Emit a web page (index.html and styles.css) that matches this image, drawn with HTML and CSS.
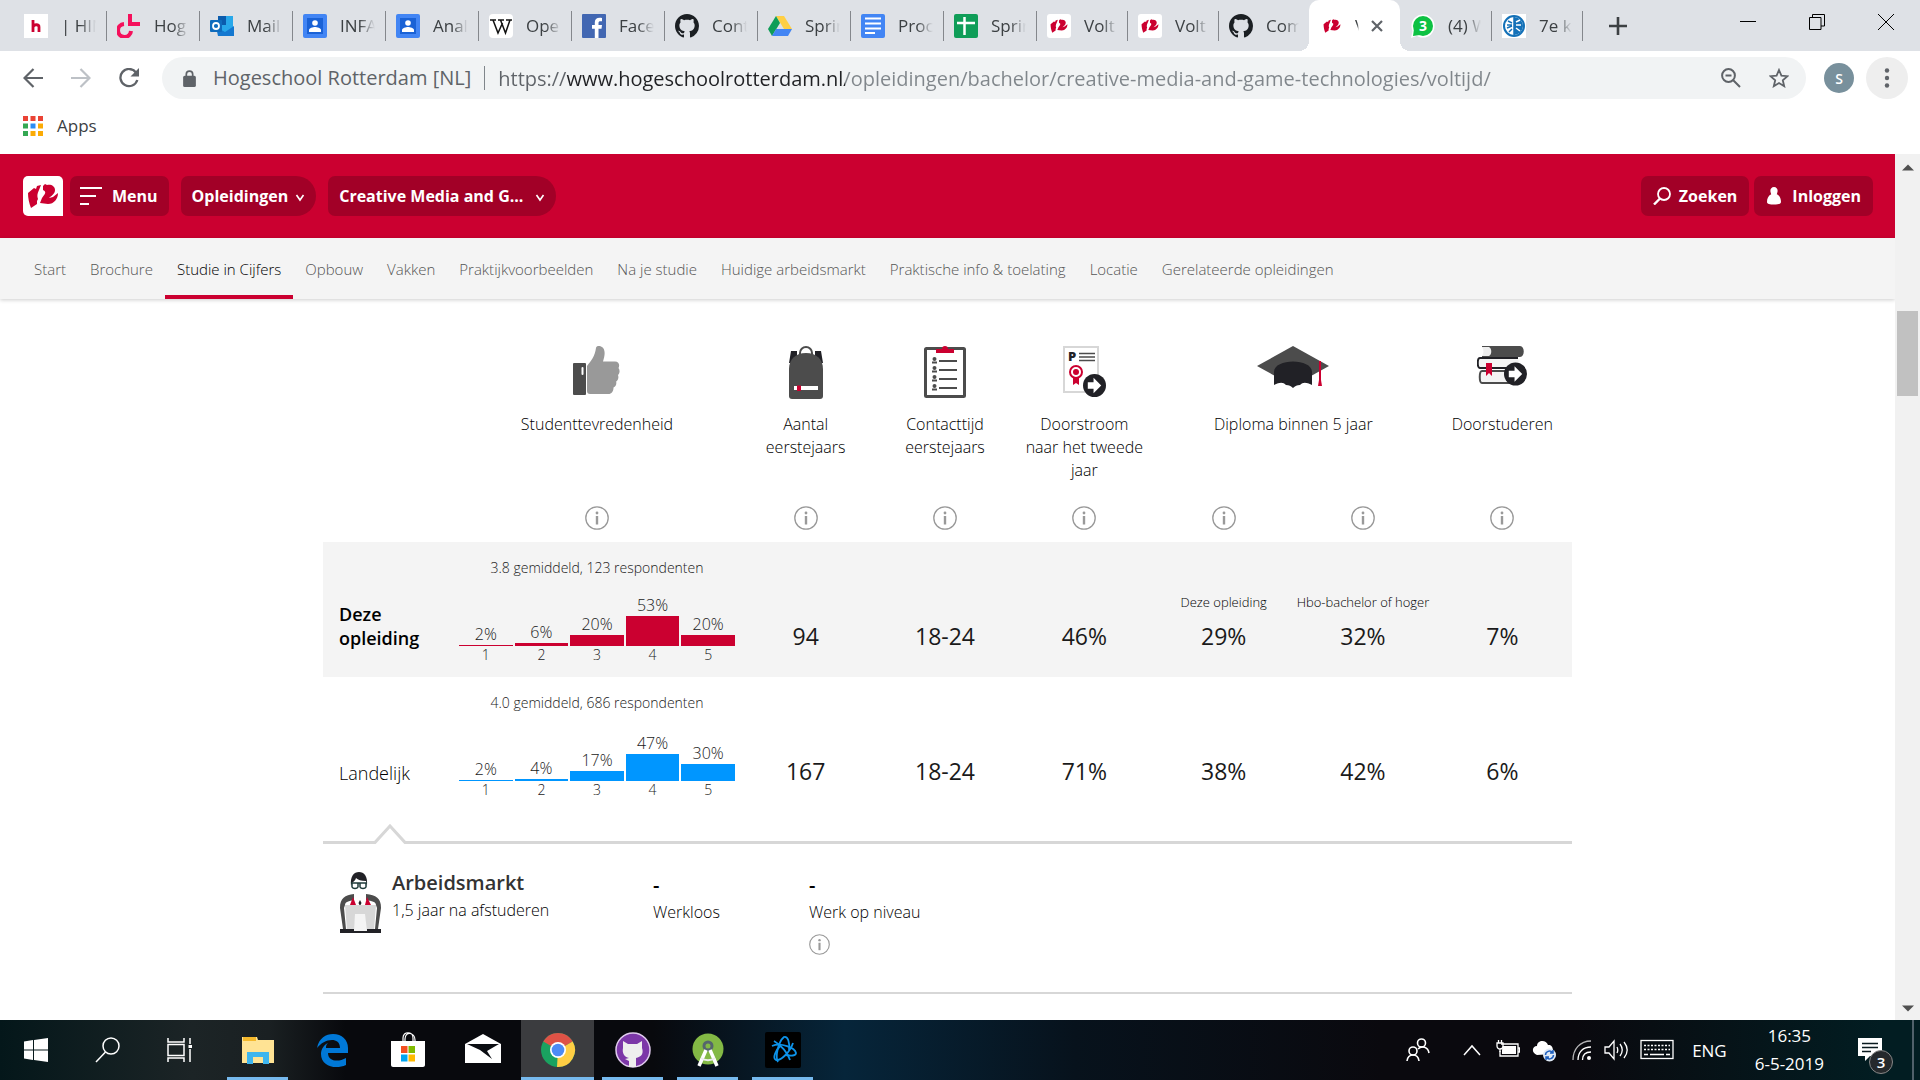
FILE: index.html
```html
<!DOCTYPE html>
<html lang="nl">
<head>
<meta charset="utf-8">
<meta name="viewport" content="width=device-width, initial-scale=1">
<title>Voltijd - Hogeschool Rotterdam</title>
<link rel="stylesheet" href="styles.css">
</head>
<body>
<svg class="defs" aria-hidden="true">
  <symbol id="hr-mark" viewBox="4 6 32 28">
    <path d="M5 17 11 12 13 13 14 10 18 9 16 14C14 18 14 20 15 23L14 25 14 28 8 32C6 27 5 22 5 17Z"/>
    <path d="M20 10 22 8 24 9C28 8 32 10 32 14 32 18 28 20 26 22L30 21 35 17C35 23 31 28 25 28L17 27 19 22C22 18 24 16 20 14Z"/>
  </symbol>
  <symbol id="github" viewBox="0 0 16 16">
    <path d="M8 0C3.58 0 0 3.58 0 8c0 3.54 2.29 6.53 5.47 7.59.4.07.55-.17.55-.38 0-.19-.01-.82-.01-1.49-2.01.37-2.53-.49-2.69-.94-.09-.23-.48-.94-.82-1.13-.28-.15-.68-.52-.01-.53.63-.01 1.08.58 1.23.82.72 1.21 1.87.87 2.33.66.07-.52.28-.87.51-1.07-1.78-.2-3.64-.89-3.64-3.95 0-.87.31-1.59.82-2.15-.08-.2-.36-1.02.08-2.12 0 0 .67-.21 2.2.82.64-.18 1.32-.27 2-.27s1.36.09 2 .27c1.53-1.04 2.2-.82 2.2-.82.44 1.1.16 1.92.08 2.12.51.56.82 1.27.82 2.15 0 3.07-1.87 3.75-3.65 3.95.29.25.54.73.54 1.48 0 1.07-.01 1.93-.01 2.2 0 .21.15.46.55.38A8.01 8.01 0 0 0 16 8c0-4.42-3.58-8-8-8z"/>
  </symbol>
  <symbol id="contact" viewBox="0 0 24 24">
    <rect width="24" height="24" rx="2" fill="#4285f4"/><rect x="4" y="4" width="16" height="16" fill="#1a62d6"/>
    <circle cx="12" cy="9" r="2.8" fill="#fff"/><path d="M6 18v-2c0-2 4-3 6-3s6 1 6 3v2z" fill="#fff"/>
  </symbol>
  <symbol id="info" viewBox="0 0 24 24">
    <circle cx="12" cy="12" r="11.2" fill="none" stroke="#999" stroke-width="1.3"/>
    <circle cx="12" cy="7" r="1.4" fill="#999"/><rect x="10.8" y="10" width="2.4" height="8.5" fill="#999"/>
  </symbol>
  <symbol id="go" viewBox="0 0 24 24">
    <circle cx="12" cy="12" r="12" fill="#212126"/><path d="M5 8.500h6V4l8 8-8 8v-4.500H5z" fill="#fff"/>
  </symbol>
  <symbol id="caret" viewBox="0 0 10 10"><path d="M1.500 3 5 8 8.500 3" fill="none" stroke="#fff" stroke-width="1.600"/></symbol>
</svg>

<header class="browser">
  <div class="tabstrip">
    <div class="tabs">
      <button class="tab"><svg class="favicon" viewBox="0 0 24 24"><rect width="24" height="24" fill="#fff"/><path d="M9 6v12M9 13c1-3 6-3 6 0v5" fill="none" stroke="#cb0030" stroke-width="2.800"/></svg><span>| HIN</span></button>
      <button class="tab"><svg class="favicon" viewBox="0 0 24 24"><path d="M13 0v10h10M7 10A6.500 6.500 0 1 0 14 17" fill="none" stroke="#f5105c" stroke-width="4"/></svg><span>Hog</span></button>
      <button class="tab"><svg class="favicon" viewBox="0 0 24 24"><path d="M8 2h15v20H8z" fill="#28a8ea"/><path d="M8 2h8v9H8z" fill="#0b5cad"/><path d="M6 13l9 5 9-6v10H8z" fill="#1478d0"/><rect y="6" width="12" height="12" rx="1" fill="#0f6cbd"/><circle cx="6" cy="12" r="3" fill="none" stroke="#fff" stroke-width="1.800"/></svg><span>Mail</span></button>
      <button class="tab"><svg class="favicon"><use href="#contact"/></svg><span>INFA</span></button>
      <button class="tab"><svg class="favicon"><use href="#contact"/></svg><span>Anal</span></button>
      <button class="tab"><svg class="favicon" viewBox="0 0 24 24"><rect width="24" height="24" rx="4" fill="#fff"/><path d="M1 6h6M9 6h6M17 6h6M4 6l5 13L13.500 9M11.500 6l5 13L21 6" fill="none" stroke="#111" stroke-width="1.500"/></svg><span>Ope</span></button>
      <button class="tab"><svg class="favicon" viewBox="0 0 24 24"><rect width="24" height="24" rx="1" fill="#4267b2"/><path d="M16.500 24v-9.300h3l.5-3.600h-3.500V9c0-1.200.5-1.800 2-1.800H20V4c-5-.7-7.200.8-7.200 4.500v2.600H10v3.600h2.800V24z" fill="#fff"/></svg><span>Face</span></button>
      <button class="tab"><svg class="favicon"><use href="#github" fill="#1b1f23"/></svg><span>Cont</span></button>
      <button class="tab"><svg class="favicon" viewBox="0 0 24 24"><path d="M8 2h8l8 13h-8z" fill="#ffcf44"/><path d="M8 2l4 7-8 13-4-7z" fill="#0f9d58"/><path d="M8 15h16l-4 7H4z" fill="#4285f4"/></svg><span>Sprin</span></button>
      <button class="tab"><svg class="favicon" viewBox="0 0 24 24"><rect width="24" height="24" rx="2" fill="#4285f4"/><path d="M4 4.500h16M4 9.500h16M4 14.500h16M4 19h10" stroke="#fff" stroke-width="2"/></svg><span>Proc</span></button>
      <button class="tab"><svg class="favicon" viewBox="0 0 24 24"><rect width="24" height="24" rx="2" fill="#0f9d58"/><path d="M3 9h18M10.500 3v18" stroke="#fff" stroke-width="2.500"/></svg><span>Sprin</span></button>
      <button class="tab"><svg class="favicon" viewBox="0 0 24 24"><rect width="24" height="24" rx="3" fill="#fff"/><use href="#hr-mark" x="3" y="3" width="18" height="18" fill="#cb0030"/></svg><span>Volt</span></button>
      <button class="tab"><svg class="favicon" viewBox="0 0 24 24"><rect width="24" height="24" rx="3" fill="#fff"/><use href="#hr-mark" x="3" y="3" width="18" height="18" fill="#cb0030"/></svg><span>Volt</span></button>
      <button class="tab before-active"><svg class="favicon"><use href="#github" fill="#1b1f23"/></svg><span>Com</span></button>
      <div class="tab active"><svg class="favicon" viewBox="0 0 24 24"><use href="#hr-mark" x="3" y="3" width="18" height="18" fill="#cb0030"/></svg><span>V</span><button class="close" aria-label="Tabblad sluiten"><svg viewBox="0 0 14 14"><path d="M2 2l10 10M12 2L2 12" stroke="#5f6368" stroke-width="2.200"/></svg></button></div>
      <button class="tab"><svg class="favicon" viewBox="0 0 24 24"><circle cx="12" cy="12" r="11.500" fill="#fff"/><path d="M0 24l2-9 6 6z" fill="#fff"/><circle cx="12" cy="12" r="10" fill="#0dc143"/><path d="M2 22l1-7 6 6z" fill="#0dc143"/><text x="12" y="17" text-anchor="middle" class="fav-text">3</text></svg><span>(4) W</span></button>
      <button class="tab"><svg class="favicon" viewBox="0 0 24 24"><rect width="24" height="24" fill="#fff"/><circle cx="12" cy="12" r="10" fill="#fff" stroke="#1471b8" stroke-width="2"/><path d="M12 3a9 9 0 0 1 0 18z" fill="#1471b8"/><path d="M12 2v20M6 7l4 2M5 11h5M5 14l5-2M7 18l3-3" stroke="#1471b8" stroke-width="1.500"/><path d="M14 8l4-2M14 11h5M14 14l4 3" stroke="#fff" stroke-width="1.500"/></svg><span>7e k</span></button>
    </div>
    <button class="newtab" aria-label="Nieuw tabblad"><svg viewBox="0 0 18 18"><path d="M9 0v18M0 9h18" stroke="#3c4043" stroke-width="2.600"/></svg></button>
    <div class="window-controls">
      <button aria-label="Minimaliseren"><svg viewBox="0 0 16 16"><path d="M0 7.500h16" stroke="#000"/></svg></button>
      <button aria-label="Verkleinen"><svg viewBox="0 0 16 16"><path d="M.5 3.500h11.500v12H.5zM3.500 3.500V.5h12v11.500H12" fill="none" stroke="#000"/></svg></button>
      <button aria-label="Sluiten"><svg viewBox="0 0 16 16"><path d="M0 0l16 16M16 0L0 16" stroke="#000"/></svg></button>
    </div>
  </div>
  <div class="toolbar">
    <button class="nav-btn" aria-label="Vorige"><svg viewBox="0 0 20 20"><path d="M20 10H2M10.500 1L1.500 10l9 9" fill="none" stroke="#5f6368" stroke-width="2.200"/></svg></button>
    <button class="nav-btn" aria-label="Volgende"><svg viewBox="0 0 20 20"><path d="M0 10h18M9.500 1l9 9-9 9" fill="none" stroke="#bdc1c6" stroke-width="2.200"/></svg></button>
    <button class="nav-btn" aria-label="Vernieuwen"><svg viewBox="0 0 20 20"><path d="M17 4.500A8.600 8.600 0 1 0 18.300 12" fill="none" stroke="#5f6368" stroke-width="2.300"/><path d="M20 0v8.500h-8.500z" fill="#5f6368"/></svg></button>
    <div class="omnibox">
      <svg class="lock" viewBox="0 0 12 16"><rect y="5.500" width="12" height="10.500" rx="1.500" fill="#5f6368"/><path d="M3 6V4a3 3 0 0 1 6 0v2" fill="none" stroke="#5f6368" stroke-width="1.600"/></svg>
      <label class="site-name" for="url">Hogeschool Rotterdam [NL]</label>
      <input class="url" id="url" type="text" value="https://www.hogeschoolrotterdam.nl/opleidingen/bachelor/creative-media-and-game-technologies/voltijd/">
      <button class="tool" aria-label="Zoom"><svg viewBox="0 0 20 20"><circle cx="7.500" cy="7.500" r="6.400" fill="none" stroke="#5f6368" stroke-width="2"/><path d="M12 12l7 7M4.500 7.500h6" stroke="#5f6368" stroke-width="2"/></svg></button>
      <button class="tool" aria-label="Bladwijzer"><svg viewBox="0 0 20 20"><path d="M10 2l2.400 5.700 6 .5-4.600 4 1.400 6L10 15l-5.200 3.200 1.400-6-4.600-4 6-.5z" fill="none" stroke="#5f6368" stroke-width="1.800"/></svg></button>
    </div>
    <button class="avatar">S</button>
    <button class="more" aria-label="Menu"><svg viewBox="0 0 6 20"><circle cx="3" cy="2.500" r="2.200"/><circle cx="3" cy="10" r="2.200"/><circle cx="3" cy="17.500" r="2.200"/></svg></button>
  </div>
  <div class="bookmarks">
    <a href="#" class="apps"><svg viewBox="0 0 20 20"><path d="M0 0h5v5H0zM7.500 0h5v5h-5zM15 0h5v5h-5z" fill="#ea4335"/><path d="M0 7.500h5v5H0zM0 15h5v5H0z" fill="#34a853"/><path d="M7.500 7.500h5v5h-5z" fill="#2a8cf4"/><path d="M15 7.500h5v5h-5zM7.500 15h5v5h-5zM15 15h5v5h-5z" fill="#fbab05"/></svg>Apps</a>
  </div>
</header>

<div class="viewport">
  <div class="site">
    <div class="topbar">
      <a href="#" class="logo" aria-label="Hogeschool Rotterdam"><svg viewBox="0 0 40 40"><use href="#hr-mark" x="4" y="6" width="32" height="28" fill="#cb0030"/></svg></a>
      <button class="pill menu"><svg class="burger" viewBox="0 0 22 18"><path d="M0 1h22M0 9h16M0 17h9" stroke="#fff" stroke-width="2"/></svg>Menu</button>
      <button class="pill crumb">Opleidingen<svg class="caret"><use href="#caret"/></svg></button>
      <button class="pill crumb wide">Creative Media and G...<svg class="caret"><use href="#caret"/></svg></button>
      <div class="actions">
        <button class="pill"><svg class="act" viewBox="0 0 18 18"><circle cx="11" cy="7" r="6" fill="none" stroke="#fff" stroke-width="1.800"/><path d="M7 11.500L1 17.500" stroke="#fff" stroke-width="2.400"/></svg>Zoeken</button>
        <button class="pill"><svg class="act" viewBox="0 0 18 18"><path d="M8 0c3 0 4.400 3 3.200 6l-.4 1.200c3 1.500 4.200 4.300 4.200 7.800 0 2-3 2.500-7 2.500s-7-.5-7-2.500c0-3.500 1.200-6.300 4.200-7.800L4.800 6C3.600 3 5 0 8 0z" fill="#fff"/></svg>Inloggen</button>
      </div>
    </div>
    <nav class="subnav">
      <a href="#">Start</a><a href="#">Brochure</a><a href="#" class="current">Studie in Cijfers</a><a href="#">Opbouw</a><a href="#">Vakken</a><a href="#">Praktijkvoorbeelden</a><a href="#">Na je studie</a><a href="#">Huidige arbeidsmarkt</a><a href="#">Praktische info &amp; toelating</a><a href="#">Locatie</a><a href="#">Gerelateerde opleidingen</a>
    </nav>
    <main class="content">
      <table class="figures">
        <colgroup><col class="c-label"><col class="c-chart"><col span="6"></colgroup>
        <thead>
          <tr class="heads">
            <td></td>
            <th scope="col"><div class="pic"><svg width="48" height="50" viewBox="0 0 48 50"><rect y="17" width="13" height="32" rx="1" fill="#4c4c4c"/><rect x="8.500" y="21" width="2" height="8" rx="1" fill="#fff"/><path d="M14 20C18 15 22 10 23 2c.3-2 3-2.500 5-1.500 5 2 4 9 2 15h12c4 0 5 4 3.500 6.500 1.500 2 1.500 5-.5 7 1 3 0 5.500-1.800 6.500.5 3-.5 5-2.700 6 0 4-2 6.500-5 6.500H17c-2 0-3-1-3-3z" fill="#999"/></svg></div>Studenttevredenheid</th>
            <th scope="col"><div class="pic"><svg width="36" height="54" viewBox="0 0 36 54"><path d="M3 5h6v12H1zM27 5h6l2 12h-8z" fill="#212126"/><path d="M12 10V7a6 6 0 0 1 12 0v3" fill="none" stroke="#4c4c4c" stroke-width="2"/><path d="M1 23C1 13 8 7 18 7s17 6 17 16v27c0 2-1 3-3 3H4c-2 0-3-1-3-3z" fill="#4c4c4c"/><path d="M6 40h24v4H6z" fill="#fff"/><path d="M9 39.500h4V45H9z" fill="#cb0030"/></svg></div>Aantal eerstejaars</th>
            <th scope="col"><div class="pic"><svg width="42" height="54" viewBox="0 0 42 54"><rect x="1.500" y="2.500" width="39" height="48" rx="1" fill="#fff" stroke="#4c4c4c" stroke-width="3"/><path d="M12 3h6a3 3 0 0 1 6 0h6v4H12z" fill="#cb0030"/><path d="M15 15h18M15 24h18M15 33h18M15 42h18" stroke="#4c4c4c" stroke-width="2"/><g fill="#4c4c4c"><circle cx="10.500" cy="13" r="2"/><circle cx="10.500" cy="22" r="2"/><circle cx="10.500" cy="31" r="2"/><circle cx="10.500" cy="40" r="2"/><path d="M8 15.500h5v2H8zM8 24.500h5v2H8zM8 33.500h5v2H8zM8 42.500h5v2H8z"/></g></svg></div>Contacttijd eerstejaars</th>
            <th scope="col"><div class="pic"><svg width="43" height="52" viewBox="0 0 43 52"><rect x="1" y="1" width="34" height="45" fill="#fff" stroke="#d7d7d7" stroke-width="2"/><text x="5" y="15" class="p-mark">P</text><path d="M16 7.500h16M16 11h16M16 14.500h16" stroke="#4c4c4c" stroke-width="1.300"/><path d="M10 31h6v8l-3-2-3 2z" fill="#cb0030"/><circle cx="13" cy="26" r="6" fill="#fff" stroke="#cb0030" stroke-width="2"/><circle cx="13" cy="26" r="3" fill="#cb0030"/><use href="#go" x="20" y="28" width="23" height="23"/></svg></div>Doorstroom naar het tweede jaar</th>
            <th scope="col" colspan="2"><div class="pic"><svg width="72" height="43" viewBox="0 0 72 43"><path d="M36 0l36 20-36 20L0 20z" fill="#4c4c4c"/><path d="M17 26c0-14 38-14 38 0v13c-6-3-9-3-12 0-3 0-5 1-7 3-2-2-4-3-7-3-3-3-6-3-12 0z" fill="#212126"/><path d="M63 15v21" stroke="#cb0030" stroke-width="2"/><path d="M61 40l1-6h2l1 6z" fill="#cb0030"/></svg></div>Diploma binnen 5 jaar</th>
            <th scope="col"><div class="pic"><svg width="50" height="41" viewBox="0 0 50 41"><path d="M5 1h12v9H5c2-3 2-6 0-9z" fill="#eee"/><path d="M5 0h38c5 0 5 11 0 11H5v-1h7c3-1 3-8 0-9H5z" fill="#4c4c4c"/><path d="M41 12H3c-3 0-3 10 0 10h40" fill="#f4f4f4" stroke="#212126" stroke-width="2"/><path d="M41 25H5c-3 0-3 12 0 12h36" fill="#f4f4f4" stroke="#4c4c4c" stroke-width="2"/><path d="M9 17h6v13l-3-3-3 3z" fill="#cb0030"/><use href="#go" x="27" y="16" width="23" height="24"/></svg></div>Doorstuderen</th>
          </tr>
          <tr class="infos">
            <td></td>
            <td><button class="info" aria-label="Info"><svg><use href="#info"/></svg></button></td>
            <td><button class="info" aria-label="Info"><svg><use href="#info"/></svg></button></td>
            <td><button class="info" aria-label="Info"><svg><use href="#info"/></svg></button></td>
            <td><button class="info" aria-label="Info"><svg><use href="#info"/></svg></button></td>
            <td><button class="info" aria-label="Info"><svg><use href="#info"/></svg></button></td>
            <td><button class="info" aria-label="Info"><svg><use href="#info"/></svg></button></td>
            <td><button class="info" aria-label="Info"><svg><use href="#info"/></svg></button></td>
          </tr>
        </thead>
        <tbody>
          <tr class="own">
            <th scope="row">Deze opleiding</th>
            <td class="chart-cell">
              <div class="caption">3.8 gemiddeld, 123 respondenten</div>
              <div class="chart">
                <div class="bar"><span>2%</span><i style="height:1px"></i></div>
                <div class="bar"><span>6%</span><i style="height:3px"></i></div>
                <div class="bar"><span>20%</span><i style="height:11px"></i></div>
                <div class="bar"><span>53%</span><i style="height:30px"></i></div>
                <div class="bar"><span>20%</span><i style="height:11px"></i></div>
              </div>
              <div class="scale"><span>1</span><span>2</span><span>3</span><span>4</span><span>5</span></div>
            </td>
            <td>94</td><td>18-24</td><td>46%</td>
            <td><small>Deze opleiding</small>29%</td><td><small>Hbo-bachelor of hoger</small>32%</td><td>7%</td>
          </tr>
          <tr class="national">
            <th scope="row">Landelijk</th>
            <td class="chart-cell">
              <div class="caption">4.0 gemiddeld, 686 respondenten</div>
              <div class="chart">
                <div class="bar"><span>2%</span><i style="height:1px"></i></div>
                <div class="bar"><span>4%</span><i style="height:2px"></i></div>
                <div class="bar"><span>17%</span><i style="height:10px"></i></div>
                <div class="bar"><span>47%</span><i style="height:27px"></i></div>
                <div class="bar"><span>30%</span><i style="height:17px"></i></div>
              </div>
              <div class="scale"><span>1</span><span>2</span><span>3</span><span>4</span><span>5</span></div>
            </td>
            <td>167</td><td>18-24</td><td>71%</td><td>38%</td><td>42%</td><td>6%</td>
          </tr>
        </tbody>
      </table>
      <div class="divider"><svg viewBox="0 0 32 20"><path d="M0 18.500h1L16 2l15 16.500h1" fill="none" stroke="#d7d7d7" stroke-width="3"/></svg></div>
      <section class="market">
        <div class="market-head">
          <svg width="41" height="62" viewBox="0 0 41 62"><path d="M11 14C10 4 14 0 19 0s9 4 8 14l-1-5c-5 0-8-1-10-3-1 4-4 3-5 8z" fill="#212126"/><path d="M11 11h16M12 11h6v4c-1 2-5 2-6 0zM20 11h6v4c-1 2-5 2-6 0z" fill="none" stroke="#1f3a3a" stroke-width="1.500"/><path d="M0 36c0-10 5-13 14-14v6c-5 1-9 2-9 5l-1 3 2 21H3zM41 36c0-10-5-13-15-14v6c6 1 10 2 10 5l1 3-2 21h3z" fill="#4c4c4c"/><path d="M13 25l3 8h-6zM27 25l4 8h-6z" fill="#cb0030"/><path d="M20 28l1.500 3-1.500 3-1.500-3z" fill="#212126"/><path d="M5 33h31l-2 25H7z" fill="#d7d7d7"/><path d="M15 42h10l2 17H14z" fill="#f4f4f4"/><path d="M0 57h14v2h13v-2h14v4H0z" fill="#212126"/></svg>
          <div><h2>Arbeidsmarkt</h2><p>1,5 jaar na afstuderen</p></div>
        </div>
        <div class="fact"><strong>-</strong><p>Werkloos</p></div>
        <div class="fact"><strong>-</strong><p>Werk op niveau</p><button class="info small" aria-label="Info"><svg><use href="#info"/></svg></button></div>
      </section>
    </main>
  </div>
  <div class="scrollbar" aria-hidden="true">
    <svg class="arrow" viewBox="0 0 12 7"><path d="M0 6.500L6 .5l6 6z" fill="#505050"/></svg>
    <div class="track"><div class="thumb"></div></div>
    <svg class="arrow" viewBox="0 0 12 7"><path d="M0 .5l6 6 6-6z" fill="#505050"/></svg>
  </div>
</div>

<footer class="taskbar">
  <div class="apps-row">
    <button class="task system" aria-label="Start"><svg viewBox="0 0 36 36"><path d="M6 9.500L15 8v9.500H6zM16 8l14-2v11.500H16zM6 18.500h9V28l-9-1.500zM16 18.500h14V30l-14-2z" fill="#fff"/></svg></button>
    <button class="task system" aria-label="Zoeken"><svg viewBox="0 0 36 36"><circle cx="21" cy="14" r="8" fill="none" stroke="#fff" stroke-width="1.500"/><path d="M15.500 20L6 30" stroke="#fff" stroke-width="1.500"/></svg></button>
    <button class="task system" aria-label="Taakweergave"><svg viewBox="0 0 36 36"><path d="M6 6v4h16V6M6 12.500h16v11H6zM6 30v-4h16v4M28 6v6M28 17v13" fill="none" stroke="#fff" stroke-width="1.500"/><path d="M26.500 13h3.500v3h-3.500z" fill="#fff"/></svg></button>
    <button class="task open" aria-label="Verkenner"><svg viewBox="0 0 36 36"><path d="M2 5h15l1 3h16v23H2z" fill="#ffe394"/><path d="M3 5h13v4H3z" fill="#f5b92c"/><path d="M7 32V20h22v12h-6v-7H13v7z" fill="#3eb5ee"/></svg></button>
    <button class="task" aria-label="Edge"><svg viewBox="0 0 36 36"><path d="M2 16C4 6 11 2 18 2c9 0 15 6 15 14v5H13c0 9 11 9 18 5v7c-11 5-25 1-25-11 0-5 3-9 7-11-2 2-2 3-2 5h14c0-6-4-8-8-8-6 0-11 3-15 8z" fill="#0078d7"/></svg></button>
    <button class="task" aria-label="Store"><svg viewBox="0 0 36 36"><path d="M13 10V6c0-7 10-7 10 0v4M15 10V7c0-8 10-7 10 1v2" fill="none" stroke="#fff" stroke-width="1.200"/><path d="M1 9h34v24c0 1-1 2-2 2H3c-1 0-2-1-2-2z" fill="#fff"/><path d="M11 14h6.500v7H11z" fill="#f25022"/><path d="M18.500 14H25v7h-6.500z" fill="#7fba00"/><path d="M11 22.500h6.500v7H11z" fill="#00a4ef"/><path d="M18.500 22.500H25v7h-6.500z" fill="#ffb900"/></svg></button>
    <button class="task" aria-label="Mail"><svg viewBox="0 0 36 36"><path d="M0 12L18 2l18 10v19H0z" fill="#fff"/><path d="M2 12h32L22 19l5 8L15 18z" fill="#0b0d12"/></svg></button>
    <button class="task open focused" aria-label="Chrome"><svg viewBox="0 0 36 36"><circle cx="18" cy="18" r="17" fill="#1aa260"/><path d="M18 18L3.300 9.500A17 17 0 0 1 32.700 9.500z" fill="#de5246"/><path d="M18 18l14.700-8.500A17 17 0 0 1 17 35z" fill="#ffce44"/><circle cx="18" cy="18" r="8" fill="#fff"/><circle cx="18" cy="18" r="6.300" fill="#4c8bf5"/></svg></button>
    <button class="task open" aria-label="GitHub"><svg viewBox="0 0 36 36"><circle cx="18" cy="18" r="17" fill="#7c37a8" stroke="#e0cbee" stroke-width="1.500"/><path d="M8 9l5 3h9l5-3v7c2 6-1 9-6 10v9h-7v-6l-4-2 4-1c-5-1-7-5-6-10z" fill="#eee"/></svg></button>
    <button class="task open" aria-label="Android Studio"><svg viewBox="0 0 36 36"><circle cx="18" cy="17" r="15.500" fill="#83b945"/><circle cx="18" cy="14" r="4" fill="none" stroke="#55656d" stroke-width="3"/><path d="M16 18L9 34M20 18l7 16" stroke="#fff" stroke-width="3.500"/><path d="M11 26c4 3 10 3 14 0" fill="none" stroke="#eee" stroke-width="2"/></svg></button>
    <button class="task open" aria-label="Battle.net"><svg viewBox="0 0 36 36"><rect width="36" height="36" rx="2" fill="#000"/><g fill="none" stroke="#0d93ea" stroke-width="1.800"><path d="M7 14C16 10 30 16 31 21c0 3-5 3-10 2"/><path d="M13 30c-3-5 0-20 6-25 4-1 6 6 5 13"/><path d="M28 11c-3 9-12 18-17 17-4-2 0-10 5-15M9 9c7 4 14 12 16 19"/></g></svg></button>
  </div>
  <div class="tray">
    <button class="t-people" aria-label="Personen"><svg viewBox="0 0 24 24"><g fill="none" stroke="#fff" stroke-width="1.600"><circle cx="15.500" cy="5" r="4"/><circle cx="7" cy="13" r="4"/><path d="M1 23c1-8 11-8 12 0M12 11c4-4 10-2 11 4"/></g></svg></button>
    <button class="t-up" aria-label="Verborgen pictogrammen"><svg viewBox="0 0 18 24"><path d="M1 17l8-9 8 9" fill="none" stroke="#fff" stroke-width="1.500"/></svg></button>
    <button aria-label="Batterij"><svg viewBox="0 0 24 24"><path d="M5 6h17v12H4v-5M22 10h1.500v4H22" fill="none" stroke="#fff" stroke-width="1.300"/><path d="M7 8h13v8H6v-4z" fill="#fff"/><path d="M1 5h6v3c0 4-6 4-6 0zM2.500 2v3M5.500 2v3M4 11v3" fill="none" stroke="#fff" stroke-width="1.300"/></svg></button>
    <button aria-label="OneDrive"><svg viewBox="0 0 24 24"><path d="M5 17c-6-2-5-9 0-9 0-6 9-7 11-1 5-1 6 6 4 9z" fill="#fff"/><circle cx="17.500" cy="17" r="6.500" fill="#dfe9f5"/><path d="M13.500 17a4 4 0 0 1 7-2.500M21.500 17a4 4 0 0 1-7 2.500M21 12v3h-3M14 22v-3h3" fill="none" stroke="#1d5fbf" stroke-width="1.500"/></svg></button>
    <button class="t-wifi" aria-label="Netwerk"><svg viewBox="0 0 20 24"><g fill="none" stroke="#fff" stroke-width="1.300"><path d="M1 22C1 11 8 3 19 3" opacity=".7"/><path d="M6 22c0-8 5-13 13-13M10.500 22c0-5 3-8 8.500-8"/></g><circle cx="17" cy="20" r="2" fill="#fff"/></svg></button>
    <button class="t-sound" aria-label="Volume"><svg viewBox="0 0 24 24"><path d="M1 9h4l5-6v18l-5-6H1zM13 9c1 2 1 4 0 6M16 6c3 4 3 8 0 12M20 4c4 5 4 11 0 16" fill="none" stroke="#fff" stroke-width="1.300"/></svg></button>
    <button class="t-keys" aria-label="Toetsenbord"><svg viewBox="0 0 34 24"><rect x="1" y="2.500" width="32" height="18" fill="none" stroke="#fff" stroke-width="1.300"/><path d="M4 7.500h26M4 11.500h26" stroke="#fff" stroke-width="1.500" stroke-dasharray="2 1.500"/><path d="M4 16.500h4M10 16.500h14M26 16.500h4" stroke="#fff" stroke-width="1.500"/></svg></button>
    <button class="lang">ENG</button>
    <button class="clock"><time>16:35</time><time>6-5-2019</time></button>
    <button class="notify" aria-label="Meldingen"><svg viewBox="0 0 24 24"><path d="M0 0h24v18H12l-5 5v-5H0z" fill="#fff"/><path d="M4 5.500h16M4 9.500h16M4 13.500h9" stroke="#0a1a1f" stroke-width="1.300"/></svg><span class="badge">3</span></button>
    <div class="peek"></div>
  </div>
</footer>
</body>
</html>
```
FILE: styles.css
```css
* { box-sizing: border-box; }
body { margin: 0; min-height: 100vh; display: flex; flex-direction: column; background: #fff; color: #000; font-family: "Open Sans", "Noto Sans", sans-serif; font-size: 16px; }
button, input { margin: 0; padding: 0; border: 0; background: none; color: inherit; font: inherit; }
a { color: inherit; text-decoration: none; }
svg { display: block; flex: none; }
h2, p { margin: 0; }
.defs { position: absolute; width: 0; height: 0; }

/* Browser frame */
.tabstrip { display: flex; align-items: center; height: 51px; padding-left: 13px; background: #dee1e6; }
.tabs { display: flex; flex: 0 1 1571px; height: 51px; min-width: 0; }
.tab { position: relative; flex: 0 1 93px; min-width: 0; height: 51px; display: flex; align-items: center; gap: 13px; padding: 0 10px 0 11px; color: #3c4043; font-size: 17px; text-align: left; }
.tab:nth-last-child(-n+6) { flex-basis: 91px; }
.tab::after { content: ""; position: absolute; right: -1px; top: 11px; width: 1px; height: 30px; background: #84878c; }
.tab.before-active::after, .tab.active::after { display: none; }
.tab span { flex: 1; min-width: 0; overflow: hidden; white-space: nowrap; mask-image: linear-gradient(90deg, #000 55%, transparent); }
.tab.active { gap: 11px; padding-right: 16px; background: #fff; border-radius: 10px 10px 0 0; }
.tab.active::before { content: ""; position: absolute; left: -10px; right: -10px; bottom: 0; height: 10px; background: radial-gradient(circle at 0 0, transparent 10px, #fff 10px) left / 10px 10px no-repeat, radial-gradient(circle at 100% 0, transparent 10px, #fff 10px) right / 10px 10px no-repeat; }
.favicon { width: 24px; height: 24px; }
.fav-text { font: bold 14px "Open Sans", sans-serif; fill: #fff; }
.close svg { width: 14px; height: 14px; }
.newtab { padding: 0 25px; }
.newtab svg { width: 18px; height: 18px; }
.window-controls { margin-left: auto; display: flex; align-self: flex-start; }
.window-controls button { width: 69px; height: 43px; display: flex; align-items: center; justify-content: center; }
.window-controls svg { width: 16px; height: 16px; }

.toolbar { display: flex; align-items: center; height: 48px; padding: 6px 12px 0 23px; }
.nav-btn { margin-right: 28px; }
.nav-btn svg { width: 20px; height: 20px; }
.omnibox { flex: 1; min-width: 0; height: 42px; display: flex; align-items: center; border-radius: 21px; background: #f1f3f4; padding: 0 17px 0 21px; font-size: 20px; color: #5f6368; }
.nav-btn + .omnibox { margin-left: -5px; }
.lock { width: 13px; height: 17px; margin-right: 17px; }
.site-name { padding-right: 13px; border-right: 1px solid #80868b; line-height: 24px; white-space: nowrap; }
.url { flex: 1; min-width: 0; margin-left: 13px; height: 30px; outline: 0; color: #5f6368; background: linear-gradient(90deg, #5f6368 68px, #202124 68px, #202124 347px, #80868b 347px); -webkit-background-clip: text; background-clip: text; -webkit-text-fill-color: transparent; }
.tool { margin-left: 28px; }
.tool svg { width: 20px; height: 20px; }
.avatar { width: 30px; height: 30px; margin: 0 12px 0 18px; border-radius: 50%; background: #78909c; color: #fff; font-size: 14px; font-weight: 600; }
.more { width: 42px; height: 42px; border-radius: 50%; background: #eee; display: flex; align-items: center; justify-content: center; fill: #5f6368; }
.more svg { width: 6px; height: 20px; }
.bookmarks { height: 55px; padding: 15px 23px; }
.apps { display: inline-flex; align-items: center; gap: 14px; font-size: 17px; line-height: 24px; color: #3c4043; }
.apps svg { width: 20px; height: 20px; }

/* Site */
.viewport { flex: 1; display: flex; }
.site { flex: 1; min-width: 0; }
.topbar { display: flex; align-items: center; padding: 22px 22px 22px 23px; background: #cb0030; }
.logo { width: 40px; height: 40px; background: #fff; border-radius: 5px 5px 0 5px; margin-right: 7px; }
.pill { display: flex; align-items: center; height: 40px; border-radius: 7px; background: #a20027; color: #fff; font-size: 16px; font-weight: 700; white-space: nowrap; padding: 0 12px; }
.menu { padding: 0 11px 0 10px; margin-right: 12px; }
.burger { width: 22px; height: 18px; margin-right: 10px; }
.crumb { border-radius: 7px 20px 20px 7px; padding: 0 11px; margin-right: 12px; }
.caret { width: 10px; height: 10px; margin: 2px 0 0 7px; }
.wide .caret { margin-left: 12px; }
.actions { display: flex; gap: 5px; margin-left: auto; }
.act { width: 18px; height: 18px; margin-right: 8px; }
.subnav { display: flex; padding: 0 22px; background: #f4f4f4; color: #555; font-size: 15px; font-weight: 300; line-height: 22px; box-shadow: 0 1px 4px rgba(0,0,0,.2); white-space: nowrap; }
.subnav a { padding: 20px 12px 15px; border-bottom: 4px solid transparent; }
.subnav .current { color: #000; border-color: #cb0030; }
.content { max-width: 1249px; margin: 0 auto; padding-top: 47px; }
.figures { width: 100%; table-layout: fixed; border-collapse: collapse; text-align: center; }
.figures th, .figures td { padding: 0; font-weight: 300; }
.c-label { width: 135px; }
.c-chart { width: 278px; }
.figures .heads th { height: 136px; padding: 0 8px; vertical-align: top; line-height: 23px; }
.pic { height: 67px; }
.pic svg { margin: 0 auto; }
.p-mark { font: 800 13px "Open Sans", sans-serif; fill: #212126; }
.figures .infos td { padding: 24px 0 12px; }
.info { display: block; margin: 0 auto; }
.info svg { width: 24px; height: 24px; }
.own { background: #f4f4f4; }
.figures tbody tr { height: 135px; }
.figures tbody th { vertical-align: bottom; text-align: left; padding: 0 16px 27px; font-size: 18px; line-height: 24px; }
.figures .own th { font-weight: 600; }
.figures tbody td { vertical-align: bottom; padding-bottom: 26px; font-size: 23px; font-weight: 400; line-height: 30px; color: #1a1a1a; }
.figures small { display: block; margin-bottom: 9px; font-size: 13px; font-weight: 300; line-height: 20px; white-space: nowrap; color: #000; }
.figures tbody .chart-cell { vertical-align: top; padding: 15px 1px 0; font-weight: 300; }
.caption { font-size: 14px; line-height: 22px; }
.chart { display: flex; align-items: flex-end; gap: 2px; height: 67px; font-size: 16px; line-height: 22px; }
.bar { flex: 1; }
.bar span, .bar i { display: block; }
.bar i { background: #cb0030; }
.national .bar i { background: #0096ff; }
.scale { display: flex; gap: 2px; font-size: 14px; line-height: 18px; }
.scale span { flex: 1; }
.divider { display: flex; align-items: flex-end; margin-top: 12px; }
.divider svg { width: 32px; height: 20px; }
.divider::before, .divider::after { content: ""; height: 3px; background: #d7d7d7; }
.divider::before { width: 51px; }
.divider::after { flex: 1; }
.market { display: grid; grid-template-columns: 313px 156px 1fr; padding: 26px 17px 37px; border-bottom: 2px solid #d7d7d7; font-weight: 300; line-height: 26px; }
.market-head { display: flex; gap: 11px; }
.market-head svg { margin-top: 2px; }
h2 { font-size: 20px; font-weight: 600; line-height: 26px; color: #333; }
.market p { line-height: 28px; }
.fact { padding-top: 2px; }
.fact strong { display: block; font-size: 20px; font-weight: 600; }
.small { margin: 8px 0 0; }
.small svg { width: 21px; height: 21px; }

.scrollbar { width: 25px; display: flex; flex-direction: column; align-items: center; padding: 10px 0 8px; background: #f1f1f1; }
.arrow { width: 12px; height: 7px; }
.track { flex: 1; align-self: stretch; padding: 140px 2px 0; }
.thumb { height: 85px; background: #c1c1c1; }

/* Taskbar */
.taskbar { height: 60px; display: flex; justify-content: space-between; color: #fff; background: linear-gradient(90deg, #04171a 0, #1c2426 10%, #1a2022 14%, #08090d 18%, #08090d 34%, #06253a 44%, #07121c 56%, #0a090e 72%, #0a090e 82%, #021d22 98%); }
.apps-row { display: flex; }
.task { width: 75px; height: 60px; display: flex; align-items: center; justify-content: center; border-bottom: 3px solid transparent; padding-top: 3px; }
.task.system { width: 72px; }
.task.open { width: 61px; margin: 0 7px; border-bottom-color: #76b9ed; }
.task.system + .task.open { margin-left: 11px; }
.task.open.focused { width: 73px; margin: 0 1px; background: #3b3c3f; }
.task svg { width: 36px; height: 36px; }
.tray { display: flex; align-items: center; }
.tray svg { width: 24px; height: 24px; }
.tray button { margin-right: 12px; }
.tray .t-people { margin-right: 33px; }
.tray .t-up { margin-right: 15px; }
.tray .t-up svg { width: 18px; }
.tray .t-wifi { margin-left: 4px; }
.tray .t-wifi svg { width: 20px; }
.tray .t-keys svg { width: 34px; }
.tray .t-keys, .tray .lang { margin-right: 18px; }
.lang, .clock { font-size: 17px; }
.clock { display: flex; flex-direction: column; line-height: 28px; }
.tray .clock { margin: 0 34px 0 10px; }
.tray .notify { position: relative; margin-right: 30px; }
.badge { position: absolute; left: 11px; top: 12px; width: 24px; height: 24px; border: 1px solid #888; border-radius: 50%; background: #25292c; font-size: 15px; font-weight: 600; line-height: 22px; text-align: center; }
.peek { width: 2px; height: 60px; margin-right: 6px; background: #50606a; }
```
